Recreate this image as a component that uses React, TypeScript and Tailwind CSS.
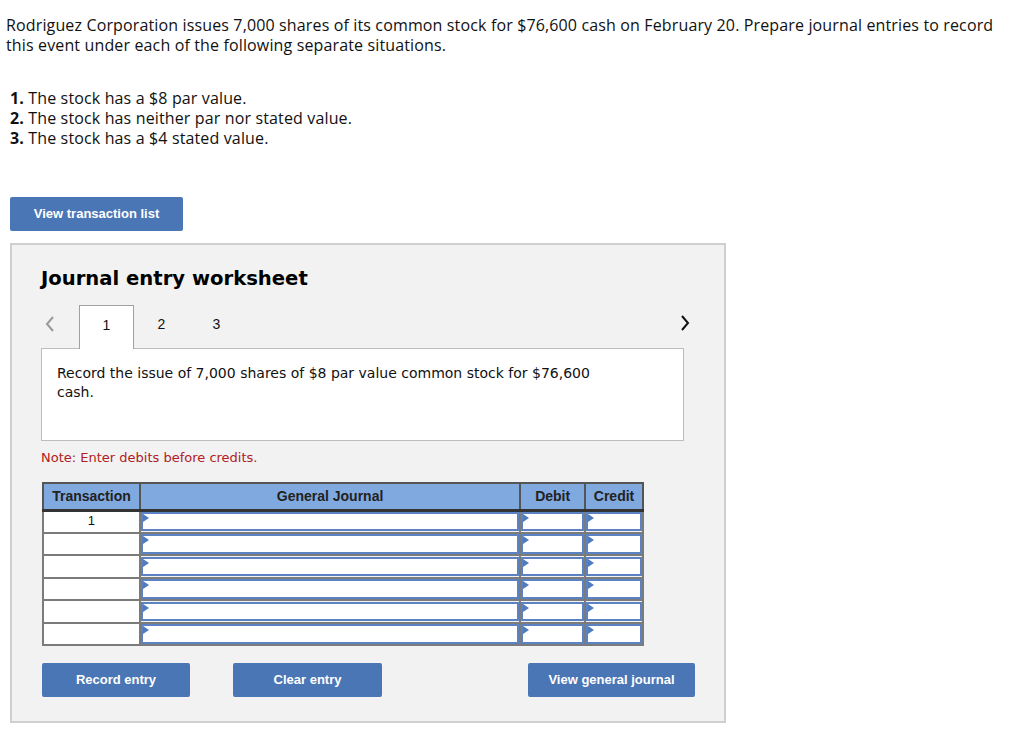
import React from 'react'

const rows = ['1', '', '', '', '', '']

function InputCell() {
  return (
    <td className="border-2 border-[#7b7b7b] p-0">
      <div className="relative h-[19.5px] border-2 border-[#5b83c4] bg-white">
        <span className="absolute left-0 top-0 h-0 w-0 border-y-[4px] border-l-[6px] border-y-transparent border-l-[#4f7bc0]" />
      </div>
    </td>
  )
}

function Button({ label, className }: { label: string; className: string }) {
  return (
    <button
      className={`h-[34px] rounded-[2px] bg-[#4a76b5] text-[13px] font-bold text-white ${className}`}
      style={{ fontFamily: '"Liberation Sans", Arial, sans-serif' }}
    >
      {label}
    </button>
  )
}

const arial = { fontFamily: '"Liberation Sans", Arial, sans-serif' }

export default function App() {
  return (
    <div className="min-h-screen bg-white text-[#111]">
      <div className="px-[6px] pt-[15px] text-[16px] leading-[20px] tracking-[0.14px]" style={{ fontFamily: '"Open Sans", Lato, sans-serif' }}>
        <p>
          Rodriguez Corporation issues 7,000 shares of its common stock for $76,600 cash on February 20. Prepare journal entries to record
          <br />
          this event under each of the following separate situations.
        </p>
        <ol className="mt-[33px] pl-[4px]">
          <li><b>1.</b> The stock has a $8 par value.</li>
          <li><b>2.</b> The stock has neither par nor stated value.</li>
          <li><b>3.</b> The stock has a $4 stated value.</li>
        </ol>
      </div>

      <div className="ml-[10px] mt-[49px]">
        <Button label="View transaction list" className="w-[173px]" />
      </div>

      <div className="ml-[10px] mt-[12px] h-[480px] w-[716px] border-2 border-[#cfcfcf] bg-[#f2f2f2] pl-[29px] pt-[20px]" style={{ fontFamily: '"DejaVu Sans", Verdana, sans-serif' }}>
        <h2 className="text-[19.6px] font-bold leading-[28px] text-black">Journal entry worksheet</h2>

        <div className="mt-[12px] flex h-[43px] w-[643px] items-stretch">
          <div className="flex w-[38px] items-center justify-start pb-[6px] pl-[4px]">
            <svg width="10" height="16" viewBox="0 0 10 16"><path d="M8 1 L2 8 L8 15" fill="none" stroke="#999" strokeWidth="2" /></svg>
          </div>
          <div className="relative z-10 -mb-[1px] flex w-[55px] items-center justify-center border-x border-t border-[#a0a0a0] bg-white pb-[4px] text-[14px]" style={arial}>1</div>
          <div className="flex w-[55px] items-center justify-center pb-[4px] text-[14px]" style={arial}>2</div>
          <div className="flex w-[55px] items-center justify-center pb-[4px] text-[14px]" style={arial}>3</div>
          <div className="-mr-[6px] flex flex-1 items-center justify-end pb-[8px]">
            <svg width="10" height="16" viewBox="0 0 10 16"><path d="M2 1 L8 8 L2 15" fill="none" stroke="#111" strokeWidth="2" /></svg>
          </div>
        </div>

        <div className="h-[93px] w-[643px] border border-[#bdbdbd] bg-white px-[15px] pt-[15px] text-[14px] leading-[19px]">
          Record the issue of 7,000 shares of $8 par value common stock for $76,600
          <br />
          cash.
        </div>

        <p className="mt-[8px] text-[13px] leading-[18px] text-[#b0201e]">Note: Enter debits before credits.</p>

        <table className="mt-[15px] ml-[1px] w-[602px] border-collapse" style={arial}>
          <thead>
            <tr className="h-[27px] bg-[#80a9df] text-[14px] font-bold text-[#222]">
              <th className="w-[97px] border-2 border-[#555] border-b-[3px] border-b-[#333] font-bold">Transaction</th>
              <th className="w-[382px] border-2 border-[#555] border-b-[3px] border-b-[#333] font-bold">General Journal</th>
              <th className="w-[65px] border-2 border-[#555] border-b-[3px] border-b-[#333] font-bold">Debit</th>
              <th className="w-[58px] border-2 border-[#555] border-b-[3px] border-b-[#333] font-bold">Credit</th>
            </tr>
          </thead>
          <tbody>
            {rows.map((t, i) => (
              <tr key={i} className="h-[22.5px]">
                <td className="border-2 border-[#7b7b7b] bg-white p-0 text-center align-top text-[13px] leading-[18px]">{t}</td>
                <InputCell />
                <InputCell />
                <InputCell />
              </tr>
            ))}
          </tbody>
        </table>

        <div className="mt-[17px] flex w-[654px]">
          <Button label="Record entry" className="ml-[1px] w-[148px]" />
          <Button label="Clear entry" className="ml-[43px] w-[149px]" />
          <Button label="View general journal" className="ml-auto w-[167px]" />
        </div>
      </div>
    </div>
  )
}
